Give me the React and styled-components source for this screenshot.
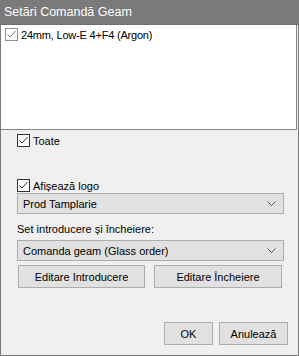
import React from "react";
import styled, { createGlobalStyle } from "styled-components";

const GlobalStyle = createGlobalStyle`
  html, body {
    margin: 0;
    padding: 0;
    background: #f0f0f0;
  }
  * {
    box-sizing: border-box;
  }
`;

const Window = styled.div`
  width: 299px;
  height: 356px;
  display: flex;
  flex-direction: column;
  background: #f0f0f0;
  border: 1px solid #7a7a7a;
  border-top: none;
  font-family: "Liberation Sans", Arial, sans-serif;
  font-size: 11px;
  color: #000;
`;

const TitleBar = styled.div`
  height: 25px;
  margin: 0 -1px;
  padding-left: 4px;
  background: #7a7a7a;
  color: #fff;
  line-height: 25px;
  font-size: 12.5px;
  border-bottom: 1px solid #6f6f6f;
`;

const ListBox = styled.div`
  height: 105px;
  margin-right: 1px;
  background: #fff;
  border: 1px solid #828790;
  border-top: none;
  border-left: none;
  padding: 2px 4px;
`;

const Row = styled.label`
  display: flex;
  align-items: center;
  gap: 3px;
  height: ${p => p.h || 15}px;
  margin-top: ${p => p.top || 0}px;
  white-space: nowrap;
  letter-spacing: ${p => p.tight ? "-0.2px" : "normal"};
`;

const Box = styled.span`
  width: 13px;
  height: 13px;
  flex: none;
  display: inline-flex;
  background: #fff;
  border: 1px solid ${p => (p.light ? "#8f8f8f" : "#333")};
  svg {
    display: block;
  }
`;

const Body = styled.div`
  flex: 1;
  display: flex;
  flex-direction: column;
  padding: 0 14px 10px 16px;
`;

const Select = styled.div`
  height: 21px;
  display: flex;
  align-items: center;
  justify-content: space-between;
  padding: 0 7px 0 5px;
  background: #e1e1e1;
  border: 1px solid #adadad;
  margin-top: ${p => p.top || 0}px;
`;

const Label = styled.div`
  margin-top: 6px;
  height: 19px;
  line-height: 19px;
`;

const ButtonRow = styled.div`
  display: flex;
  gap: ${p => p.gap || 9}px;
  justify-content: ${p => p.end ? "flex-end" : "flex-start"};
  margin-top: ${p => p.top || 0}px;
  padding-left: ${p => p.end ? 0 : 1}px;
  margin-right: ${p => p.end ? -4 : 0}px;
`;

const Button = styled.button`
  width: ${p => p.w}px;
  height: 23px;
  padding: 0;
  background: #e1e1e1;
  border: 1px solid #adadad;
  font-family: inherit;
  font-size: 11px;
  color: #000;
`;

const Spacer = styled.div`
  flex: 1;
`;

const Check = ({ light }) => (
  <Box light={light}>
    <svg width="11" height="11" viewBox="0 0 11 11">
      <path
        d="M1.5 5.5 L4 8 L9.5 2"
        fill="none"
        stroke={light ? "#777" : "#333"}
        strokeWidth="1"
      />
    </svg>
  </Box>
);

const Chevron = () => (
  <svg width="9" height="5" viewBox="0 0 9 5">
    <path d="M0.5 0.5 L4.5 4.5 L8.5 0.5" fill="none" stroke="#555" strokeWidth="1" />
  </svg>
);

export default function App() {
  return (
    <>
      <GlobalStyle />
      <Window>
        <TitleBar>Setări Comandă Geam</TitleBar>
        <ListBox>
          <Row tight>
            <Check light />
            24mm, Low-E 4+F4 (Argon)
          </Row>
        </ListBox>
        <Body>
          <Row top={3}>
            <Check />
            Toate
          </Row>
          <Row top={30}>
            <Check />
            Afișează logo
          </Row>
          <Select>
            Prod Tamplarie
            <Chevron />
          </Select>
          <Label>Set introducere și încheiere:</Label>
          <Select top={1}>
            Comanda geam (Glass order)
            <Chevron />
          </Select>
          <ButtonRow top={4}>
            <Button w={127}>Editare Introducere</Button>
            <Button w={128}>Editare Încheiere</Button>
          </ButtonRow>
          <Spacer />
          <ButtonRow end gap={6}>
            <Button w={49}>OK</Button>
            <Button w={69}>Anulează</Button>
          </ButtonRow>
        </Body>
      </Window>
    </>
  );
}
